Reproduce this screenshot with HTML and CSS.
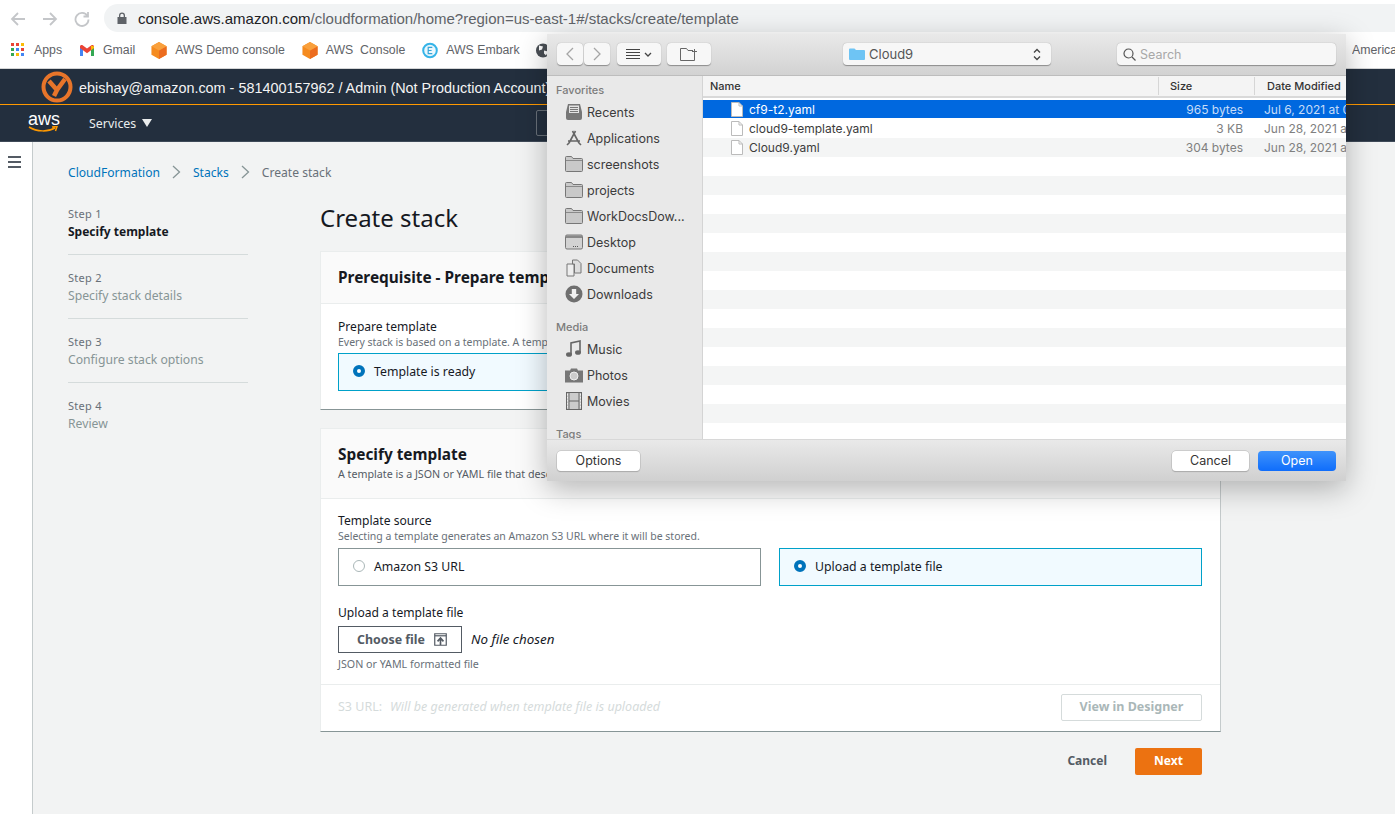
FILE: index.html
```html
<!DOCTYPE html>
<html lang="en">
<head>
    <meta charset="UTF-8" />
    <meta name="viewport" content="width=device-width, initial-scale=1" />
    <title>CloudFormation - Create stack</title>
    <link rel="stylesheet" href="styles.css">
</head>
<body>

    <svg class="sprites" aria-hidden="true">
        <symbol id="cube" viewBox="0 0 16 18">
            <path d="M8 0l8 4.500v9L8 18 0 13.500v-9z" fill="#f58b1f" />
            <path d="M8 9l8-4.500v9L8 18z" fill="#ec6c1f" />
            <path d="M8 9L0 4.500 8 0l8 4.500z" fill="#f9a03c" />
        </symbol>
        <symbol id="folder" viewBox="0 0 18 16">
            <path d="M.5 3V1.500a1 1 0 0 1 1-1h5l1.500 2h8.500a1 1 0 0 1 1 1v11a1 1 0 0 1-1 1h-15a1 1 0 0 1-1-1z" fill="#c9c9c9" stroke="#777" />
            <path d="M1 4.500h16" stroke="#8a8a8a" />
        </symbol>
        <symbol id="doc" viewBox="0 0 12 15">
            <path d="M.5.500h7.500l3.500 3.500v10.500H.5z" fill="#fff" stroke="#bbb" />
            <path d="M8 .500v3.500h3.500" fill="none" stroke="#bbb" />
        </symbol>
    </svg>

    <!-- Browser -->
    <div class="toolbar">
        <svg class="nav-icon" viewBox="0 0 16 16"><path d="M15 8H2M8 2L2 8l6 6" /></svg>
        <svg class="nav-icon" viewBox="0 0 16 16"><path d="M1 8h13M8 2l6 6-6 6" /></svg>
        <svg class="nav-icon" viewBox="0 0 16 16"><path d="M13.500 5A6.500 6.500 0 1 0 14.500 8.500M14 1v4.500H9.500" /></svg>
        <div class="url-pill">
            <svg class="lock" viewBox="0 0 10 12"><path d="M2 5V3.500a3 3 0 0 1 6 0V5h1.500v7H.5V5zM3.300 5h3.400V3.500a1.700 1.700 0 0 0-3.400 0z" /></svg>
            <span class="url"><span class="url-host">console.aws.amazon.com</span>/cloudformation/home?region=us-east-1#/stacks/create/template</span>
        </div>
    </div>

    <div class="bookmarks">
        <a class="bookmark bm-apps">
            <svg class="bm-icon" viewBox="0 0 14 14">
                <rect x="0" y="0" width="3" height="3" fill="#ea4335" /><rect x="5" y="0" width="3" height="3" fill="#ea4335" /><rect x="10" y="0" width="3" height="3" fill="#fbbc05" />
                <rect x="0" y="5" width="3" height="3" fill="#34a853" /><rect x="5" y="5" width="3" height="3" fill="#4285f4" /><rect x="10" y="5" width="3" height="3" fill="#ea4335" />
                <rect x="0" y="10" width="3" height="3" fill="#34a853" /><rect x="5" y="10" width="3" height="3" fill="#fbbc05" /><rect x="10" y="10" width="3" height="3" fill="#4285f4" />
            </svg>
            Apps
        </a>
        <a class="bookmark bm-gmail">
            <svg class="bm-icon" viewBox="0 0 14 11">
                <path d="M0 2v9h3V4z" fill="#4285f4" /><path d="M11 4v7h3V2z" fill="#34a853" />
                <path d="M0 1.500C0 0 1.700-.4 2.600.3L7 3.600 11.400.3C12.300-.4 14 0 14 1.500V3l-3 2.300-4 3-4-3L0 3z" fill="#ea4335" />
                <path d="M11 .6l3 .9V3l-3 2.300z" fill="#fbbc05" />
            </svg>
            Gmail
        </a>
        <a class="bookmark bm-demo"><svg class="bm-cube"><use href="#cube" /></svg>AWS Demo console</a>
        <a class="bookmark bm-console"><svg class="bm-cube"><use href="#cube" /></svg>AWS&nbsp; Console</a>
        <a class="bookmark bm-embark">
            <svg class="bm-cube" viewBox="0 0 16 16">
                <circle cx="8" cy="8" r="6.800" fill="#eaf7fd" stroke="#35b4e8" stroke-width="2" />
                <path d="M10.300 4.800H6.200v6.400h4.100M6.200 8h3.400" fill="none" stroke="#35a5d8" stroke-width="1.200" />
            </svg>
            AWS Embark
        </a>
        <a class="bookmark bm-globe">
            <svg class="bm-cube" viewBox="0 0 16 16"><circle cx="8" cy="8" r="7" fill="#4a4f55" /><path d="M4 3l4 1-1 3-3 1zM9 8l4 1-2 4-2-2z" fill="#fff" /></svg>
        </a>
        <a class="bookmark bm-last">America's</a>
    </div>

    <!-- AWS console header -->
    <div class="account-bar">
        <svg class="account-logo" viewBox="0 0 32 32">
            <circle cx="16" cy="16" r="13.500" fill="none" stroke="#e8752a" stroke-width="4" />
            <path d="M8 10l8 9M24 8l-8 11-3 6" fill="none" stroke="#e8752a" stroke-width="4.500" />
        </svg>
        <span>ebishay@amazon.com - 581400157962 / Admin (Not Production Account)</span>
    </div>
    <div class="service-bar">
        <div class="aws-logo">
            <span>aws</span>
            <svg class="aws-smile" viewBox="0 0 30 7"><path d="M1 1c8 5 19 5 26 1M24 1l5-.5-1.500 4.500" fill="none" stroke="#f90" stroke-width="1.500" /></svg>
        </div>
        <div class="services">Services <span class="caret"></span></div>
        <div class="search-box"></div>
    </div>

    <div class="page">
        <div class="rail">
            <div class="burger"><span></span><span></span><span></span></div>
        </div>

        <div class="main">
            <div class="crumbs">
                <a>CloudFormation</a>
                <svg class="crumb-sep" viewBox="0 0 9 14"><path d="M1 1l6.500 6L1 13" /></svg>
                <a>Stacks</a>
                <svg class="crumb-sep" viewBox="0 0 9 14"><path d="M1 1l6.500 6L1 13" /></svg>
                <span>Create stack</span>
            </div>

            <div class="wizard">
                <ul class="steps">
                    <li class="step active"><small>Step 1</small><b>Specify template</b></li>
                    <li class="step"><small>Step 2</small><b>Specify stack details</b></li>
                    <li class="step"><small>Step 3</small><b>Configure stack options</b></li>
                    <li class="step"><small>Step 4</small><b>Review</b></li>
                </ul>

                <div class="content">
                    <h1>Create stack</h1>

                    <div class="card">
                        <div class="card-head plain">
                            <h2>Prerequisite - Prepare template</h2>
                        </div>
                        <div class="card-body first">
                            <div class="field-label">Prepare template</div>
                            <div class="field-hint">Every stack is based on a template. A template is a JSON or YAML file that contains configuration information.</div>
                            <div class="tiles three">
                                <div class="tile on"><span class="radio"></span>Template is ready</div>
                                <div class="tile"><span class="radio"></span>Use a sample template</div>
                                <div class="tile"><span class="radio"></span>Create template in Designer</div>
                            </div>
                        </div>
                    </div>

                    <div class="card">
                        <div class="card-head">
                            <h2>Specify template</h2>
                            <p>A template is a JSON or YAML file that describes your stack's resources and properties.</p>
                        </div>
                        <div class="card-body">
                            <div class="field-label">Template source</div>
                            <div class="field-hint">Selecting a template generates an Amazon S3 URL where it will be stored.</div>
                            <div class="tiles">
                                <div class="tile"><span class="radio"></span>Amazon S3 URL</div>
                                <div class="tile on"><span class="radio"></span>Upload a template file</div>
                            </div>
                            <div class="field-label upload-label">Upload a template file</div>
                            <div class="file-row">
                                <button class="choose">Choose file
                                    <svg viewBox="0 0 14 14"><path d="M.8.800h12.400v12.400H.8z" /><path d="M1 3h12" /><path class="thick" d="M7 13V6M3.800 9L7 5.500 10.200 9" /></svg>
                                </button>
                                <em>No file chosen</em>
                            </div>
                            <div class="field-hint hint-file">JSON or YAML formatted file</div>
                        </div>
                        <div class="card-foot">
                            <span class="s3-label">S3 URL:</span>
                            <em>Will be generated when template file is uploaded</em>
                            <button class="designer">View in Designer</button>
                        </div>
                    </div>

                    <div class="actions">
                        <a class="cancel">Cancel</a>
                        <button class="next">Next</button>
                    </div>
                </div>
            </div>
        </div>
    </div>

    <!-- File picker -->
    <div class="dialog">
        <div class="dlg-top">
            <div class="seg">
                <span class="dlg-btn"><svg viewBox="0 0 8 14"><path d="M7 1L1 7l6 6" /></svg></span>
                <span class="dlg-btn"><svg viewBox="0 0 8 14"><path d="M1 1l6 6-6 6" /></svg></span>
            </div>
            <span class="dlg-btn view-btn">
                <svg class="view-lines" viewBox="0 0 15 10"><path d="M0 .5h14M0 3.500h14M0 6.500h14M0 9.500h14" /></svg>
                <svg class="view-chev" viewBox="0 0 8 5"><path d="M1 1l3 3 3-3" /></svg>
            </span>
            <span class="dlg-btn new-btn">
                <svg viewBox="0 0 18 13"><path d="M.5 12.500V.5h6l1.500 2h5M.5 12.500h14V6M14.500 1v5M12 3.500h5" /></svg>
            </span>
            <div class="dlg-btn location">
                <svg class="loc-folder" viewBox="0 0 16 12"><path d="M0 1.500A1 1 0 0 1 1 .5h4.500L7 2h8a1 1 0 0 1 1 1v8a1 1 0 0 1-1 1H1a1 1 0 0 1-1-1z" fill="#6ec4f4" /></svg>
                <span>Cloud9</span>
                <svg class="loc-arrows" viewBox="0 0 8 13"><path d="M1 4.500L4 1.500l3 3M1 8.500l3 3 3-3" /></svg>
            </div>
            <div class="dlg-btn dlg-search">
                <svg viewBox="0 0 13 13"><circle cx="5.500" cy="5.500" r="4.500" /><path d="M9 9l3.500 3.500" /></svg>
                <span>Search</span>
            </div>
        </div>

        <div class="dlg-mid">
            <div class="side">
                <div class="side-title">Favorites</div>
                <div class="side-item">
                    <svg viewBox="0 0 18 18"><path d="M1 9l2-8h12l2 8v6a2 2 0 0 1-2 2H3a2 2 0 0 1-2-2z" fill="#777" /><rect x="4" y="2.500" width="10" height="7.500" fill="#e2e2e2" /><path d="M5 4.500h8M5 6.500h8M5 8.500h8" stroke="#777" /></svg>
                    Recents
                </div>
                <div class="side-item">
                    <svg viewBox="0 0 18 18"><path d="M10.500 2L4 14M7.500 2L14 14M3 12h12M2 16l2-2M16 16l-2-2" fill="none" stroke="#666" stroke-width="1.600" /></svg>
                    Applications
                </div>
                <div class="side-item"><svg viewBox="0 0 18 16"><use href="#folder" /></svg>screenshots</div>
                <div class="side-item"><svg viewBox="0 0 18 16"><use href="#folder" /></svg>projects</div>
                <div class="side-item"><svg viewBox="0 0 18 16"><use href="#folder" /></svg>WorkDocsDow...</div>
                <div class="side-item">
                    <svg viewBox="0 0 18 15"><rect x=".5" y=".5" width="17" height="14" rx="1.500" fill="#d2d2d2" stroke="#777" /><rect x="1" y="1" width="16" height="2.500" fill="#888" /><path d="M8 12h1M10 12h1M12 12h1" stroke="#555" /></svg>
                    Desktop
                </div>
                <div class="side-item">
                    <svg viewBox="0 0 18 18"><path d="M2 5h7v12H2z" fill="#eee" stroke="#777" /><path d="M7.500 1h5l3.500 3.500V14H9.500V5H7.500z" fill="#ddd" stroke="#777" /></svg>
                    Documents
                </div>
                <div class="side-item">
                    <svg viewBox="0 0 18 18"><circle cx="9" cy="9" r="8.500" fill="#6f6f6f" /><path d="M6.800 4h4.400v5H14l-5 5-5-5h2.800z" fill="#f0f0f0" /></svg>
                    Downloads
                </div>
                <div class="side-title media">Media</div>
                <div class="side-item">
                    <svg viewBox="0 0 18 18"><path d="M6 14V3l9-2v11" fill="none" stroke="#666" stroke-width="1.600" /><ellipse cx="4" cy="14.500" rx="3" ry="2.300" fill="#666" /><ellipse cx="13" cy="12.500" rx="3" ry="2.300" fill="#666" /></svg>
                    Music
                </div>
                <div class="side-item">
                    <svg viewBox="0 0 18 15"><path d="M0 3h5l1-2h6l1 2h5v12H0z" fill="#777" /><circle cx="9" cy="8.500" r="4" fill="#ccc" stroke="#eee" /></svg>
                    Photos
                </div>
                <div class="side-item">
                    <svg viewBox="0 0 16 18"><rect x=".5" y=".5" width="15" height="17" fill="#ccc" stroke="#666" /><path d="M3 0v18M13 0v18M3 9h10" stroke="#666" /><path d="M1.500 2v14M14.500 2v14" stroke="#eee" stroke-dasharray="1.500 1.500" /></svg>
                    Movies
                </div>
                <div class="side-title tags">Tags</div>
            </div>

            <div class="files">
                <div class="files-head">
                    <span class="col-name">Name</span>
                    <span class="col-size">Size</span>
                    <span class="col-date">Date Modified</span>
                </div>
                <div class="rows">
                    <div class="row selected">
                        <span class="col-name"><svg><use href="#doc" /></svg>cf9-t2.yaml</span>
                        <span class="col-size">965 bytes</span>
                        <span class="col-date">Jul 6, 2021 at 0:15 PM</span>
                    </div>
                    <div class="row">
                        <span class="col-name"><svg><use href="#doc" /></svg>cloud9-template.yaml</span>
                        <span class="col-size">3 KB</span>
                        <span class="col-date">Jun 28, 2021 at 4:02 PM</span>
                    </div>
                    <div class="row">
                        <span class="col-name"><svg><use href="#doc" /></svg>Cloud9.yaml</span>
                        <span class="col-size">304 bytes</span>
                        <span class="col-date">Jun 28, 2021 at 4:02 PM</span>
                    </div>
                </div>
            </div>
        </div>

        <div class="dlg-foot">
            <button class="mac-btn">Options</button>
            <button class="mac-btn foot-cancel">Cancel</button>
            <button class="mac-btn open">Open</button>
        </div>
    </div>

</body>
</html>
```

FILE: styles.css
```css
* {
    box-sizing: border-box;
}

html, body {
    margin: 0;
    height: 814px;
    overflow: hidden;
}

body {
    font-family: "Noto Sans", Arial, sans-serif;
    font-size: 12px;
    background: #fff;
    color: #16191f;
    position: relative;
}

.sprites {
    display: none;
}

/* browser */
.toolbar {
    height: 35px;
    display: flex;
    align-items: center;
    padding: 3px 0 0 10px;
    gap: 16px;
}

.nav-icon {
    width: 16px;
    height: 16px;
    fill: none;
    stroke: #c4c6c9;
    stroke-width: 1.800;
}

.url-pill {
    flex: 1;
    height: 28px;
    margin-left: -2px;
    margin-top: -2px;
    border-radius: 14px 0 0 14px;
    background: #f1f3f4;
    display: flex;
    align-items: center;
    padding-left: 13px;
    gap: 11px;
    font-family: "Liberation Sans", Arial, sans-serif;
    font-size: 15px;
    color: #5f6368;
}

.lock {
    width: 10px;
    height: 12px;
    fill: #5f6368;
}

.url-host {
    color: #202124;
}

.bookmarks {
    height: 34px;
    display: flex;
    align-items: center;
    padding: 0 0 3px 11px;
    font-family: "Liberation Sans", Arial, sans-serif;
    font-size: 12.300px;
    color: #5f6368;
    border-bottom: 1px solid #d5d6d7;
    white-space: nowrap;
    overflow: hidden;
}

.bookmark {
    display: flex;
    align-items: center;
}

.bm-icon {
    width: 14px;
    height: 14px;
    margin-right: 9px;
}

.bm-gmail .bm-icon {
    height: 11px;
}

.bm-cube {
    width: 16px;
    height: 17px;
    margin-right: 8px;
}

.bm-gmail { margin-left: 18px; }
.bm-demo { margin-left: 16px; }
.bm-console { margin-left: 17px; }
.bm-embark { margin-left: 17px; }
.bm-globe { margin-left: 15px; }

.bm-last {
    margin-left: auto;
    width: 43px;
    overflow: hidden;
}

.account-bar {
    height: 36px;
    background: #232f3e;
    border-bottom: 1px solid #f90;
    display: flex;
    align-items: center;
    padding-left: 41px;
    gap: 6px;
    color: #f4f4f4;
    font-family: "Liberation Sans", Arial, sans-serif;
    font-size: 14.400px;
    white-space: nowrap;
}

.account-bar span {
    padding-top: 2px;
}

.account-logo {
    width: 32px;
    height: 32px;
    flex: none;
}

.service-bar {
    height: 37px;
    background: #232f3e;
    border-bottom: 1px solid #3f4a58;
    display: flex;
    align-items: center;
    padding-left: 28px;
    color: #eaeded;
    font-size: 13px;
}

.aws-logo {
    width: 31px;
    position: relative;
    font-family: "Liberation Sans", Arial, sans-serif;
    font-size: 18px;
    line-height: 16px;
    height: 24px;
    color: #fff;
    text-align: center;
}

.aws-smile {
    display: block;
    width: 30px;
    height: 7px;
    margin-top: -1px;
}

.services {
    margin-left: 30px;
    display: flex;
    align-items: center;
    gap: 6px;
    font-size: 12.400px;
}

.caret {
    width: 0;
    height: 0;
    border-left: 5px solid transparent;
    border-right: 5px solid transparent;
    border-top: 8px solid #eaeded;
}

.search-box {
    margin-left: 384px;
    width: 400px;
    height: 26px;
    border: 1px solid #687078;
    border-radius: 2px;
}

/* page */
.page {
    height: 672px;
    display: flex;
}

.rail {
    width: 33px;
    flex: none;
    background: #fff;
    border-right: 1px solid #c5cbcc;
    padding: 14px 0 0 8px;
}

.burger {
    width: 13px;
    display: flex;
    flex-direction: column;
    gap: 3px;
}

.burger span {
    height: 2px;
    background: #545b64;
}

.main {
    flex: 1;
    background: #f2f3f3;
    padding: 20px 0 0 35px;
}

.crumbs {
    display: flex;
    align-items: center;
    height: 20px;
    font-size: 12.100px;
    color: #687078;
}

.crumbs a {
    color: #0073bb;
}

.crumb-sep {
    width: 9px;
    height: 14px;
    margin: 0 12px 0 12px;
    fill: none;
    stroke: #879596;
    stroke-width: 1.300;
}

.wizard {
    display: flex;
}

.steps {
    list-style: none;
    margin: 24px 0 0;
    padding: 0;
    width: 180px;
    flex: none;
}

.step {
    height: 64px;
    border-bottom: 1px solid #d5dbdb;
    padding-top: 15px;
}

.step:first-child {
    height: 49px;
    padding-top: 0;
}

.step:last-child {
    border-bottom: 0;
}

.step small {
    display: block;
    font-size: 11px;
    letter-spacing: 0.300px;
    line-height: 16px;
    color: #687078;
}

.step b {
    display: block;
    font-weight: 400;
    font-size: 12.200px;
    line-height: 20px;
    color: #879596;
}

.step.active b {
    font-size: 12px;
    font-weight: 700;
    color: #16191f;
}

.content {
    width: 901px;
    margin-left: 72px;
}

h1 {
    margin: 18px 0 15px;
    font-size: 24px;
    line-height: 36px;
    font-weight: 400;
    color: #16191f;
}

.card {
    background: #fff;
    border: 1px solid #eaeded;
    border-bottom: 1px solid #879596;
    border-right-color: #c5cbcc;
    margin-bottom: 18px;
}

.card-head {
    height: 70px;
    background: #fafafa;
    border-bottom: 1px solid #eaeded;
    padding: 15px 17px 0;
}

.card-head.plain {
    height: 52px;
}

h2 {
    margin: 0;
    font-size: 15.400px;
    line-height: 21px;
    font-weight: 700;
}

.card-head p {
    margin: 1px 0 0;
    font-size: 10.700px;
    line-height: 16px;
    color: #545b64;
}

.card-body {
    padding: 14px 18px 12px 17px;
}

.card-body.first {
    height: 105px;
    padding-top: 15px;
}

.first .tiles {
    margin-top: 3px;
}

.field-label {
    font-size: 12.100px;
    line-height: 16px;
}

.upload-label {
    margin-top: 19px;
}

.field-hint {
    font-size: 10.500px;
    line-height: 15px;
    color: #687078;
}

.hint-file {
    font-size: 10.700px;
}

.tiles {
    display: grid;
    grid-template-columns: 1fr 1fr;
    gap: 18px;
    margin-top: 4px;
}

.tiles.three {
    grid-template-columns: 1fr 1fr 1fr;
}

.tile {
    height: 38px;
    border: 1px solid #879596;
    display: flex;
    align-items: center;
    padding: 0 0 2px 14px;
    gap: 9px;
    font-size: 12.300px;
}

.tile.on {
    background: #f1faff;
    border-color: #00a1c9;
}

.radio {
    width: 12px;
    height: 12px;
    border-radius: 50%;
    border: 1px solid #aab7b8;
    background: #fff;
    flex: none;
}

.tile.on .radio {
    border: 4px solid #0073bb;
}

button {
    font-family: inherit;
    cursor: pointer;
}

.file-row {
    display: flex;
    align-items: center;
    margin-top: 5px;
    margin-bottom: 4px;
    gap: 9px;
    font-size: 13.400px;
}

.file-row em {
    margin-bottom: 2px;
}

.choose {
    width: 124px;
    height: 27px;
    background: #fff;
    border: 1px solid #545b64;
    font-size: 12.400px;
    font-weight: 700;
    color: #545b64;
    display: flex;
    align-items: center;
    justify-content: center;
    gap: 9px;
    padding: 0 0 0 4px;
}

.choose svg {
    width: 13px;
    height: 13px;
    fill: none;
    stroke: #545b64;
    stroke-width: 1.300;
}

.choose .thick {
    stroke-width: 1.800;
}

.card-foot {
    height: 47px;
    border-top: 1px solid #eaeded;
    display: flex;
    align-items: center;
    padding: 0 18px 1px 17px;
    font-size: 12.500px;
    color: #d5dbdb;
    gap: 8px;
}

.s3-label,
.card-foot em {
    margin-bottom: 2px;
}

.card-foot em {
    flex: 1;
}

.designer {
    width: 141px;
    height: 27px;
    background: #fff;
    border: 1px solid #d5dbdb;
    border-radius: 2px;
    font-size: 12.500px;
    font-weight: 700;
    color: #aab7b8;
    padding: 0 0 2px;
}

.actions {
    display: flex;
    justify-content: flex-end;
    align-items: center;
    margin-top: -2px;
    padding-right: 19px;
    gap: 28px;
}

.cancel {
    font-size: 12px;
    font-weight: 700;
    color: #545b64;
    margin-bottom: 2px;
}

.next {
    width: 67px;
    height: 27px;
    background: #ec7211;
    border: 0;
    border-radius: 2px;
    color: #fff;
    font-size: 12px;
    font-weight: 700;
    padding: 0 0 2px;
}

/* file picker */
.dialog {
    position: absolute;
    left: 547px;
    top: 34px;
    width: 799px;
    height: 447px;
    display: flex;
    flex-direction: column;
    font-family: Inter, "Liberation Sans", sans-serif;
    font-size: 12.500px;
    color: #3c3c3c;
    background: #fff;
    box-shadow: 0 8px 28px rgba(0, 0, 0, 0.28);
    overflow: hidden;
}

.dlg-top {
    height: 42px;
    flex: none;
    background: linear-gradient(#e9e9e9, #d2d2d2);
    border-bottom: 1px solid #bdbdbd;
    display: flex;
    align-items: flex-start;
    padding: 9px 0 0 10px;
}

.dlg-btn {
    display: flex;
    align-items: center;
    justify-content: center;
    height: 22px;
    background: #f7f7f7;
    border-radius: 4px;
    box-shadow: 0 0.500px 1px rgba(0, 0, 0, 0.35);
    flex: none;
}

.seg {
    display: flex;
    gap: 1px;
}

.seg .dlg-btn {
    width: 26px;
}

.seg svg {
    width: 8px;
    height: 14px;
    fill: none;
    stroke: #a5a5a5;
    stroke-width: 1.300;
}

.view-btn {
    width: 44px;
    margin-left: 7px;
    gap: 3px;
}

.view-lines {
    width: 15px;
    height: 10px;
    stroke: #444;
    fill: none;
}

.view-chev {
    width: 8px;
    height: 5px;
    stroke: #444;
    stroke-width: 1.300;
    fill: none;
}

.new-btn {
    width: 44px;
    margin-left: 6px;
}

.new-btn svg {
    width: 18px;
    height: 13px;
    stroke: #666;
    fill: none;
}

.location {
    width: 208px;
    margin-left: 132px;
    justify-content: flex-start;
    padding: 0 10px 0 6px;
    gap: 4px;
    font-size: 13px;
    color: #555;
}

.loc-folder {
    width: 16px;
    height: 12px;
}

.loc-arrows {
    margin-left: auto;
    width: 8px;
    height: 13px;
    fill: none;
    stroke: #444;
    stroke-width: 1.300;
}

.dlg-search {
    width: 219px;
    margin-left: 66px;
    justify-content: flex-start;
    padding-left: 6px;
    gap: 4px;
    font-size: 12.500px;
    color: #a8a8a8;
}

.dlg-search svg {
    width: 13px;
    height: 13px;
    fill: none;
    stroke: #555;
    stroke-width: 1.200;
}

.dlg-mid {
    flex: 1;
    display: flex;
    min-height: 0;
}

.side {
    width: 156px;
    flex: none;
    background: #e9e9e9;
    border-right: 1px solid #d4d4d4;
    padding: 6px 0 0 9px;
    overflow: hidden;
}

.side-title {
    font-size: 11px;
    font-weight: 500;
    line-height: 16px;
    color: #7c7c7c;
    margin-bottom: 1px;
}

.side-title.media {
    margin-top: 12px;
}

.side-title.tags {
    margin-top: 12px;
}

.side-item {
    height: 26px;
    display: flex;
    align-items: center;
    gap: 4px;
    white-space: nowrap;
    font-size: 12.500px;
}

.side-item svg {
    width: 18px;
    height: 18px;
    margin-left: 9px;
    flex: none;
}

.files {
    flex: 1;
    min-width: 0;
    overflow: hidden;
}

.files-head {
    height: 22px;
    background: #f4f4f4;
    border-bottom: 2px solid #d9d9d9;
    display: flex;
    align-items: center;
    font-size: 11px;
    font-weight: 500;
    color: #333;
}

.files-head .col-size {
    flex: none;
    padding-left: 11px;
    border-left: 1px solid #d6d6d6;
    border-right: 1px solid #d6d6d6;
    height: 18px;
    line-height: 18px;
    width: 97px;
}

.files-head .col-name {
    padding-left: 7px;
    flex: none;
    width: 455px;
}

.files-head .col-date {
    padding-left: 12px;
    flex: none;
    width: 91px;
    white-space: nowrap;
}

.rows {
    height: 342px;
    margin-top: 2px;
    background: repeating-linear-gradient(#f4f5f5 0, #f4f5f5 19px, #fff 19px, #fff 38px);
}

.row {
    height: 19px;
    display: flex;
    align-items: center;
    font-size: 12px;
    white-space: nowrap;
    overflow: hidden;
}

.row.selected {
    background: #0068df;
    color: #fff;
    height: 18px;
    margin-bottom: 1px;
    box-shadow: 0 1px 0 #fff;
    overflow: visible;
}

.col-name {
    flex: none;
    width: 455px;
    display: flex;
    align-items: center;
}

.row .col-name svg {
    width: 12px;
    height: 15px;
    margin: 0 6px 0 28px;
}

.row .col-size {
    flex: none;
    width: 85px;
    text-align: right;
    color: #808080;
}

.row .col-date {
    flex: none;
    margin-left: 21px;
    color: #808080;
}

.selected .col-size,
.selected .col-date {
    color: #c6dcf8;
}

.dlg-foot {
    height: 42px;
    flex: none;
    background: linear-gradient(#e9e9e9, #d0d0d0);
    border-top: 1px solid #d8d8d8;
    display: flex;
    align-items: center;
    padding: 0 10px;
}

.mac-btn {
    width: 83px;
    height: 20px;
    padding: 0;
    background: #fff;
    border: 0;
    border-radius: 4px;
    box-shadow: 0 0 0 0.500px #b5b5b5, 0 1px 1px rgba(0, 0, 0, 0.25);
    font-family: inherit;
    font-size: 12.500px;
    color: #333;
}

.foot-cancel {
    width: 77px;
    margin-left: auto;
}

.open {
    width: 78px;
    margin-left: 9px;
    background: linear-gradient(#3f93fb, #0f6dfb);
    box-shadow: none;
    color: #fff;
}
```
